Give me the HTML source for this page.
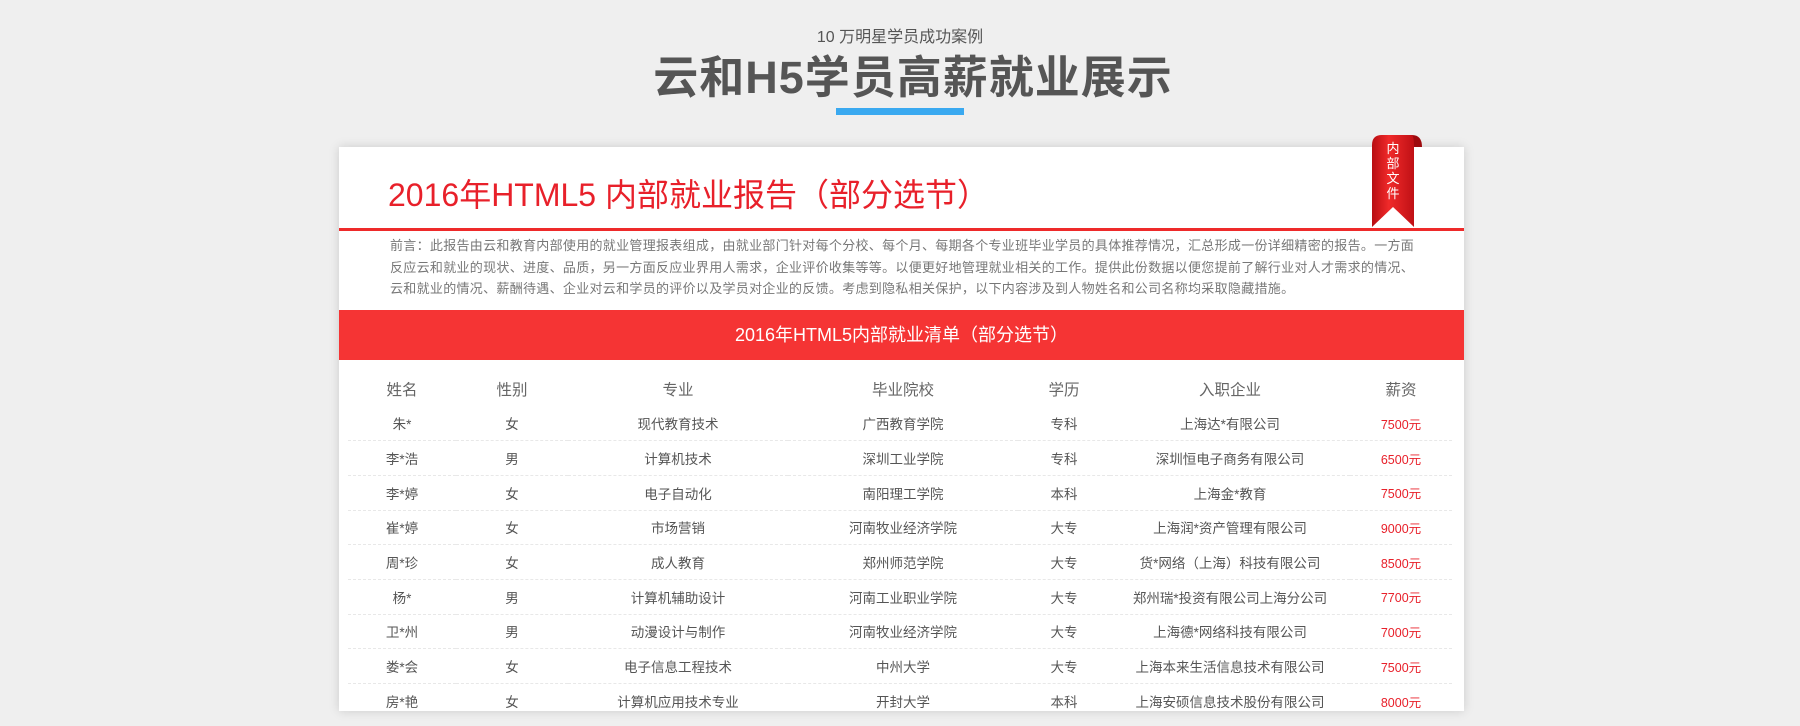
<!DOCTYPE html>
<html><head><meta charset="utf-8"><style>
*{margin:0;padding:0;box-sizing:border-box}
body{width:1800px;height:726px;background:#efefef;font-family:"Liberation Sans","Noto Sans CJK SC",sans-serif;position:relative;overflow:hidden}
.a{position:absolute}
.sub{left:0;width:1800px;top:23px;text-align:center;font-size:16px;color:#555}
.tit{left:13px;width:1800px;top:48px;text-align:center;font-size:45px;line-height:60px;font-weight:bold;color:#555;letter-spacing:1px}
.bar{left:836px;top:108px;width:128px;height:7px;background:#3aa9f0}
.card{left:339px;top:147px;width:1125px;height:564px;background:#fff;box-shadow:0 0 10px rgba(0,0,0,.15)}
.rt{left:388px;top:170px;font-size:32px;color:#e8202a;white-space:nowrap}
.rl{left:339px;top:228px;width:1125px;height:3px;background:#ee2a2a}
.p{left:390px;top:235px;width:1028px;font-size:13px;line-height:21.7px;color:#777;letter-spacing:0.3px}
.band{left:339px;top:310px;width:1125px;height:50px;background:#f53434;color:#fff;font-size:18px;text-align:center;line-height:50px}
table{position:absolute;left:348px;top:372px;width:1104px;border-collapse:collapse}
td{text-align:center;height:34.7px;font-size:13.5px;color:#555}
tr.h td{font-size:15.5px;color:#666;height:34px;border:none}
tr+tr:not(:nth-child(2)) td{border-top:1px dashed #e8e8e8}
td:last-child{color:#e8202a;font-size:12.5px}
tr.h td:last-child{color:#666;font-size:15.5px}
</style></head><body>
<div class="a sub">10 万明星学员成功案例</div>
<div class="a tit">云和H5学员高薪就业展示</div>
<div class="a bar"></div>
<div class="a card"></div>
<div class="a rt">2016年HTML5 内部就业报告（部分选节）</div>
<div class="a rl"></div>
<svg class="a" style="left:1370px;top:133px" width="56" height="96">
<defs><linearGradient id="g" x1="0" x2="1"><stop offset="0" stop-color="#b80d12"/><stop offset=".4" stop-color="#f02a2a"/><stop offset="1" stop-color="#c01015"/></linearGradient></defs>
<path d="M42 2 Q52 2 52 14 L44 14 Z" fill="#9e0a0e"/>
<path d="M2 94 L2 12 Q2 2 12 2 L42 2 Q44 4 44 12 L44 94 L23 74 Z" fill="url(#g)"/>
<text x="23" y="20" fill="#fff" font-size="13" text-anchor="middle" font-family="Noto Sans CJK SC,sans-serif">内</text>
<text x="23" y="35" fill="#fff" font-size="13" text-anchor="middle" font-family="Noto Sans CJK SC,sans-serif">部</text>
<text x="23" y="50" fill="#fff" font-size="13" text-anchor="middle" font-family="Noto Sans CJK SC,sans-serif">文</text>
<text x="23" y="65" fill="#fff" font-size="13" text-anchor="middle" font-family="Noto Sans CJK SC,sans-serif">件</text>
</svg>
<div class="a p">前言：此报告由云和教育内部使用的就业管理报表组成，由就业部门针对每个分校、每个月、每期各个专业班毕业学员的具体推荐情况，汇总形成一份详细精密的报告。一方面<br>反应云和就业的现状、进度、品质，另一方面反应业界用人需求，企业评价收集等等。以便更好地管理就业相关的工作。提供此份数据以便您提前了解行业对人才需求的情况、<br>云和就业的情况、薪酬待遇、企业对云和学员的评价以及学员对企业的反馈。考虑到隐私相关保护，以下内容涉及到人物姓名和公司名称均采取隐藏措施。</div>
<div class="a band">2016年HTML5内部就业清单（部分选节）</div>
<table>
<colgroup><col style="width:108px"><col style="width:112px"><col style="width:220px"><col style="width:230px"><col style="width:92px"><col style="width:240px"><col style="width:102px"></colgroup>
<tr class="h"><td>姓名</td><td>性别</td><td>专业</td><td>毕业院校</td><td>学历</td><td>入职企业</td><td>薪资</td></tr>
<tr><td>朱*</td><td>女</td><td>现代教育技术</td><td>广西教育学院</td><td>专科</td><td>上海达*有限公司</td><td>7500元</td></tr>
<tr><td>李*浩</td><td>男</td><td>计算机技术</td><td>深圳工业学院</td><td>专科</td><td>深圳恒电子商务有限公司</td><td>6500元</td></tr>
<tr><td>李*婷</td><td>女</td><td>电子自动化</td><td>南阳理工学院</td><td>本科</td><td>上海金*教育</td><td>7500元</td></tr>
<tr><td>崔*婷</td><td>女</td><td>市场营销</td><td>河南牧业经济学院</td><td>大专</td><td>上海润*资产管理有限公司</td><td>9000元</td></tr>
<tr><td>周*珍</td><td>女</td><td>成人教育</td><td>郑州师范学院</td><td>大专</td><td>货*网络（上海）科技有限公司</td><td>8500元</td></tr>
<tr><td>杨*</td><td>男</td><td>计算机辅助设计</td><td>河南工业职业学院</td><td>大专</td><td>郑州瑞*投资有限公司上海分公司</td><td>7700元</td></tr>
<tr><td>卫*州</td><td>男</td><td>动漫设计与制作</td><td>河南牧业经济学院</td><td>大专</td><td>上海德*网络科技有限公司</td><td>7000元</td></tr>
<tr><td>娄*会</td><td>女</td><td>电子信息工程技术</td><td>中州大学</td><td>大专</td><td>上海本来生活信息技术有限公司</td><td>7500元</td></tr>
<tr><td>房*艳</td><td>女</td><td>计算机应用技术专业</td><td>开封大学</td><td>本科</td><td>上海安硕信息技术股份有限公司</td><td>8000元</td></tr>
</table>
</body></html>
